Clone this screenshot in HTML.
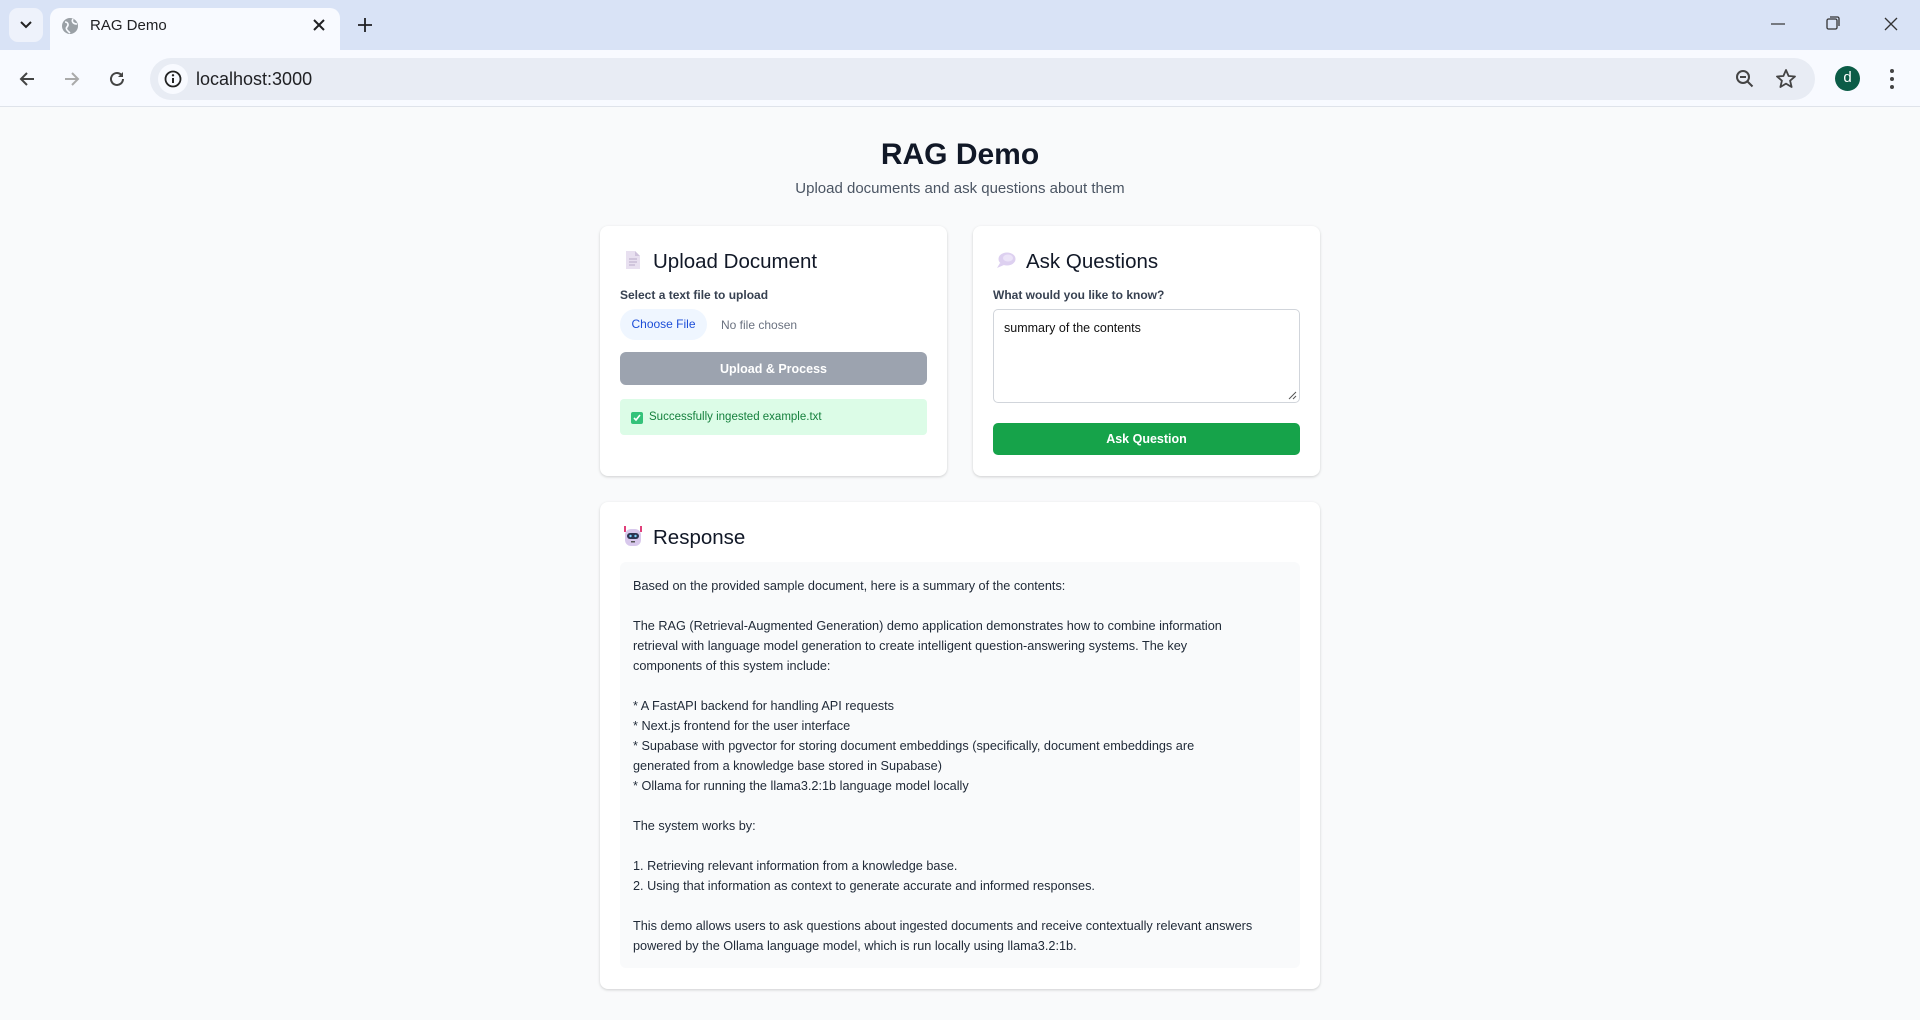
<!DOCTYPE html>
<html><head><meta charset="utf-8"><style>
*{box-sizing:border-box;margin:0;padding:0}
body{width:1920px;height:1020px;overflow:hidden;background:#f9fafb;font-family:"Liberation Sans",sans-serif;color:#111827;position:relative}
.abs{position:absolute}
.tabbar{left:0;top:0;width:1920px;height:50px;background:#d9e3f6}
.tab{left:50px;top:8px;width:290px;height:42px;background:#f8faff;border-radius:10px 10px 0 0}
.toolbar{left:0;top:50px;width:1920px;height:57px;background:#f8faff;border-bottom:1px solid #dfe3ea}
.omni{left:150px;top:58px;width:1665px;height:42px;background:#e8ecf4;border-radius:21px}
.card{background:#fff;border-radius:8px;box-shadow:0 1px 3px rgba(0,0,0,.12),0 1px 2px rgba(0,0,0,.06)}
h2{font-size:20.5px;font-weight:normal;color:#111827}
.lbl{font-size:12px;color:#374151;font-weight:bold}
</style></head><body>
<div class="abs tabbar"></div>
<div class="abs" style="left:9px;top:8px;width:34px;height:34px;background:#eef2fb;border-radius:9px"></div>
<svg class="abs" style="left:18px;top:18px" width="16" height="14"><path d="M3 4l5 5 5-5" stroke="#222" stroke-width="2" fill="none"/></svg>
<div class="abs tab"></div>
<svg class="abs" style="left:61px;top:17px" width="18" height="18"><circle cx="9" cy="9" r="8" fill="#9aa0a6"/><path d="M4 5c3 0 4 3 2 5s1 4 3 6M12 2c-2 3 1 5 4 5" stroke="#f8faff" stroke-width="1.6" fill="none"/></svg>
<div class="abs" style="left:90px;top:17px;font-size:15px;color:#202124">RAG Demo</div>
<svg class="abs" style="left:313px;top:19px" width="12" height="12"><path d="M1 1l10 10M11 1L1 11" stroke="#202124" stroke-width="2"/></svg>
<svg class="abs" style="left:358px;top:18px" width="14" height="14"><path d="M7 0v14M0 7h14" stroke="#202124" stroke-width="1.8"/></svg>
<svg class="abs" style="left:1771px;top:23px" width="14" height="2"><path d="M0 1h14" stroke="#333" stroke-width="1.2"/></svg>
<svg class="abs" style="left:1826px;top:16px" width="14" height="14"><rect x="1" y="3" width="10" height="10" rx="1.5" stroke="#333" fill="none" stroke-width="1.3"/><path d="M4 1h7.5a1.5 1.5 0 0 1 1.5 1.5V10" stroke="#333" fill="none" stroke-width="1.3"/></svg>
<svg class="abs" style="left:1884px;top:17px" width="14" height="14"><path d="M1 1l12 12M13 1L1 13" stroke="#333" stroke-width="1.3"/></svg>
<div class="abs toolbar"></div>
<svg class="abs" style="left:18px;top:70px" width="18" height="18"><path d="M16 9H3M9 3L3 9l6 6" stroke="#444" stroke-width="2" fill="none"/></svg>
<svg class="abs" style="left:63px;top:70px" width="18" height="18"><path d="M2 9h13M9 3l6 6-6 6" stroke="#aaa" stroke-width="2" fill="none"/></svg>
<svg class="abs" style="left:108px;top:70px" width="18" height="18"><path d="M15 9a6 6 0 1 1-2-4.5" stroke="#444" stroke-width="2" fill="none"/><path d="M15 2v5h-5" fill="#444"/></svg>
<div class="abs omni"></div>
<div class="abs" style="left:158px;top:64px;width:30px;height:30px;border-radius:50%;background:#f8faff"></div>
<svg class="abs" style="left:164px;top:70px" width="18" height="18"><circle cx="9" cy="9" r="7.5" stroke="#222" stroke-width="1.8" fill="none"/><path d="M9 8v5" stroke="#222" stroke-width="2"/><circle cx="9" cy="5.3" r="1.2" fill="#222"/></svg>
<div class="abs" style="left:196px;top:69px;font-size:18px;color:#202124">localhost:3000</div>
<svg class="abs" style="left:1735px;top:69px" width="20" height="20"><circle cx="8" cy="8" r="6" stroke="#444" stroke-width="2" fill="none"/><path d="M5 8h6M12.5 12.5l5 5" stroke="#444" stroke-width="2"/></svg>
<svg class="abs" style="left:1775px;top:68px" width="22" height="22"><path d="M11 2l2.6 6 6.4.5-4.9 4.2 1.5 6.3L11 15.6 5.4 19l1.5-6.3L2 8.5 8.4 8z" stroke="#444" stroke-width="1.8" fill="none" stroke-linejoin="round"/></svg>
<div class="abs" style="left:1835px;top:66px;width:25px;height:25px;border-radius:50%;background:#0b5c47;color:#fff;font-size:15px;text-align:center;line-height:24px">d</div>
<svg class="abs" style="left:1888px;top:68px" width="8" height="22"><circle cx="4" cy="3" r="2" fill="#444"/><circle cx="4" cy="11" r="2" fill="#444"/><circle cx="4" cy="19" r="2" fill="#444"/></svg>

<div class="abs" style="left:0;top:138px;width:1920px;text-align:center;font-size:30px;font-weight:bold">RAG Demo</div>
<div class="abs" style="left:0;top:180px;width:1920px;text-align:center;font-size:15px;color:#4b5563">Upload documents and ask questions about them</div>

<div class="abs card" style="left:600px;top:226px;width:347px;height:250px"></div>
<svg class="abs" style="left:625px;top:250px" width="16" height="20"><path d="M1 1h9l5 5v13H1z" fill="#e8e0f0"/><path d="M10 1v5h5" fill="#cfc3dc"/><path d="M4 9h8M4 12h8M4 15h6" stroke="#b9aac9"/></svg>
<h2 class="abs" style="left:653px;top:250px">Upload Document</h2>
<div class="abs lbl" style="left:620px;top:288px">Select a text file to upload</div>
<div class="abs" style="left:620px;top:309px;width:87px;height:31px;border-radius:16px;background:#eff6ff;color:#1d4ed8;font-size:12px;text-align:center;line-height:31px">Choose File</div>
<div class="abs" style="left:721px;top:318px;font-size:12px;color:#6b7280">No file chosen</div>
<div class="abs" style="left:620px;top:352px;width:307px;height:33px;border-radius:6px;background:#9ca3af;color:#fff;font-size:12.5px;font-weight:bold;text-align:center;line-height:34px">Upload &amp; Process</div>
<div class="abs" style="left:620px;top:399px;width:307px;height:36px;border-radius:4px;background:#dcfce7"></div>
<svg class="abs" style="left:631px;top:412px" width="12" height="12"><rect width="12" height="12" rx="2" fill="#34c27a"/><path d="M3 6l2 2 4-5" stroke="#fff" stroke-width="1.6" fill="none"/></svg>
<div class="abs" style="left:649px;top:411px;font-size:11.5px;color:#15803d">Successfully ingested example.txt</div>

<div class="abs card" style="left:973px;top:226px;width:347px;height:250px"></div>
<svg class="abs" style="left:996px;top:251px" width="20" height="18"><ellipse cx="11" cy="8" rx="8.5" ry="6.5" fill="#ddd0f0"/><path d="M4 12l-3 5 7-3z" fill="#ddd0f0"/><ellipse cx="12" cy="7" rx="5" ry="3.5" fill="#ece4f8"/></svg>
<h2 class="abs" style="left:1026px;top:250px">Ask Questions</h2>
<div class="abs lbl" style="left:993px;top:288px">What would you like to know?</div>
<div class="abs" style="left:993px;top:309px;width:307px;height:94px;border:1px solid #d1d5db;border-radius:5px;background:#fff"></div>
<div class="abs" style="left:1004px;top:321px;font-size:12.5px;color:#111">summary of the contents</div>
<svg class="abs" style="left:1288px;top:391px" width="9" height="9"><path d="M8 1L1 8M8 5L5 8" stroke="#555" stroke-width="1"/></svg>
<div class="abs" style="left:993px;top:423px;width:307px;height:32px;border-radius:5px;background:#16a34a;color:#fff;font-size:12.5px;font-weight:bold;text-align:center;line-height:33px">Ask Question</div>

<div class="abs card" style="left:600px;top:502px;width:720px;height:487px"></div>
<svg class="abs" style="left:622px;top:525px" width="22" height="22"><path d="M3 1v6M19 1v6" stroke="#e0407a" stroke-width="2"/><rect x="3" y="4" width="16" height="17" rx="6" fill="#d8c8ec"/><rect x="5" y="8" width="12" height="6" rx="3" fill="#2c3550"/><circle cx="8.5" cy="11" r="1.2" fill="#7cd4ff"/><circle cx="13.5" cy="11" r="1.2" fill="#7cd4ff"/><rect x="9" y="16" width="4" height="1.5" fill="#555"/></svg>
<h2 class="abs" style="left:653px;top:526px">Response</h2>
<div class="abs" style="left:620px;top:562px;width:680px;height:406px;border-radius:6px;background:#f9fafb"></div>
<div class="abs" style="left:633px;top:576px;font-size:12.7px;line-height:20px;color:#1f2937;white-space:nowrap">Based on the provided sample document, here is a summary of the contents:<br><br>The RAG (Retrieval-Augmented Generation) demo application demonstrates how to combine information<br>retrieval with language model generation to create intelligent question-answering systems. The key<br>components of this system include:<br><br>* A FastAPI backend for handling API requests<br>* Next.js frontend for the user interface<br>* Supabase with pgvector for storing document embeddings (specifically, document embeddings are<br>generated from a knowledge base stored in Supabase)<br>* Ollama for running the llama3.2:1b language model locally<br><br>The system works by:<br><br>1. Retrieving relevant information from a knowledge base.<br>2. Using that information as context to generate accurate and informed responses.<br><br>This demo allows users to ask questions about ingested documents and receive contextually relevant answers<br>powered by the Ollama language model, which is run locally using llama3.2:1b.</div>
</body></html>
